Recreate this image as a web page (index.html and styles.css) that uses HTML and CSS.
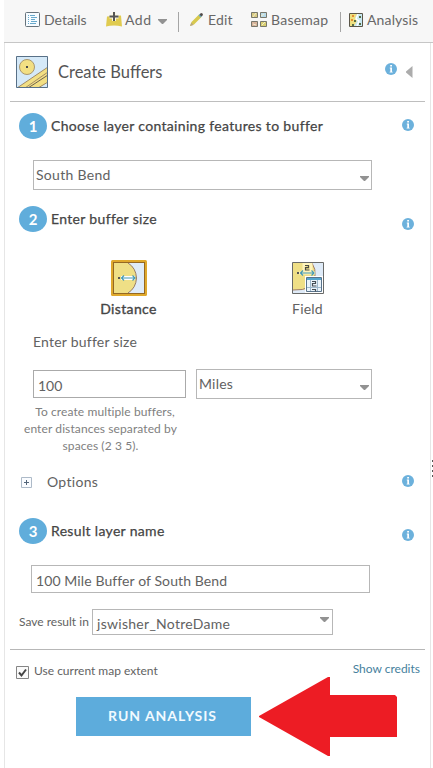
FILE: index.html
```html
<!DOCTYPE html>
<html lang="en">
<head>
<meta charset="utf-8">
<title>Create Buffers</title>
<link rel="stylesheet" href="styles.css">
</head>
<body>
<svg class="defs" width="0" height="0" aria-hidden="true">
  <symbol id="info" viewBox="0 0 12 12"><circle cx="6" cy="6" r="6" fill="#6cb1dc"/><path d="M4.8 4.6H7V8.7h.7v.9H4.6v-.9h.7V5.5h-.5zM5.2 2.1H7v1.5H5.2z" fill="#fff"/></symbol>
  <symbol id="caret" viewBox="0 0 9 5"><path d="M0 0h9v1L5 5H4L0 1z" fill="#929292"/></symbol>
</svg>
<div class="panel">
  <nav class="toolbar">
    <a class="tool details">
      <svg width="15" height="15" viewBox="0 0 15 15"><rect x=".5" y=".5" width="14" height="14" rx="1" fill="#f5fbff" stroke="#66737c"/><path d="M3 3.5h1m1 0h5M3 5.5h1m2 0h6M3 7.5h1m2 0h4M3 9.5h1m2 0h6M3 11.5h1m1 0h6" stroke="#68a9cc"/></svg>
      <span>Details</span></a>
    <a class="tool add">
      <svg width="16" height="15" viewBox="0 0 16 15"><path d="M1 4.500L15 3.500l1 11q-8-2-16 0z" fill="#e0cb50"/><path d="M8 0v9M3.500 4.500h9" stroke="#fbf8e4" stroke-width="4"/><path d="M8 0v9M3.500 4.500h9" stroke="#555" stroke-width="2"/></svg>
      <span>Add</span>
      <svg class="caret" width="9" height="5"><use href="#caret"/></svg></a>
    <i class="divider"></i>
    <a class="tool edit">
      <svg width="13" height="13" viewBox="0 0 13 13"><path d="M0 13l1.500-4L9 1.500 11.500 4l-7.500 7.500z" fill="#d8c94e"/><path d="M0 13l1.300-3.500L3.500 12z" fill="#b8a782"/><path d="M8.500 2.500L10 1l2 2-1.500 1.500z" fill="#69aabd"/><path d="M9.500 1.500L11 0q2 0 2 2l-1.500 1.500z" fill="#514b49"/></svg>
      <span>Edit</span></a>
    <a class="tool basemap">
      <svg width="16" height="15" viewBox="0 0 16 15"><g stroke="#77776b"><path d="M.5.5h6v5h-6z" fill="#d9cb83"/><path d="M9.500.5h6v5h-6z" fill="#b9dbe9"/><path d="M.5 9.500h6v5h-6z" fill="#d7b29a"/><path d="M9.500 9.500h6v5h-6z" fill="#d9cf72"/></g><path d="M2 5l3-4M10 4l3-2M2 12l3 1M11 13l3-3" stroke="#f0edcf"/></svg>
      <span>Basemap</span></a>
    <i class="divider second"></i>
    <a class="tool analysis">
      <svg width="14" height="14" viewBox="0 0 14 14"><path d="M.5.5h13v13H.5z" fill="#c8e8f2"/><path d="M1 1h7L6 5l2 3-3 5H1z" fill="#eee080"/><path d="M9 1l-2 5 3 2-2 5" stroke="#fff" stroke-width="1.300" fill="none"/><path d="M3 2h2v2H3zM2 6h2v2H2z" fill="#e58f35"/><path d="M10 3h2v2h-2zM5 7h2v2H5zM3 11h2v2H3zM10 10h2v2h-2z" fill="#596e46"/><path d="M.5.5h13v13H.5z" fill="none" stroke="#5b5649"/></svg>
      <span>Analysis</span></a>
  </nav>

  <main class="body">
    <header class="title">
      <svg width="32" height="32" viewBox="0 0 32 32"><path d="M0 0h32v32H0z" fill="#d5e9f8"/><path d="M1 32L32 11v15L23 32z" fill="#f2df83"/><path d="M1 32L32 11M9 32L32 16M22 32L32 26" stroke="#a18a66" fill="none"/><path d="M12 32L32 19" stroke="#6d6150" fill="none"/><circle cx="11" cy="11" r="7.500" fill="#f2df83" stroke="#aa976e"/><path d="M10 10h2v2h-2z" fill="#494949"/><path d="M.5.5h31v31H.5z" fill="none" stroke="#587087"/></svg>
      <h1>Create Buffers</h1>
      <svg class="info" width="12" height="12"><use href="#info"/></svg>
      <svg class="back" width="7" height="12" viewBox="0 0 7 12"><path d="M6.500 0v12L0 6.500v-1z" fill="#acacac"/></svg>
    </header>

    <section class="step one"><b class="num">1</b><h2>Choose layer containing features to buffer</h2><svg class="info" width="12" height="12"><use href="#info"/></svg></section>
    <div class="box layer"><span>South Bend</span><svg width="9" height="5"><use href="#caret"/></svg></div>

    <section class="step two"><b class="num">2</b><h2>Enter buffer size</h2><svg class="info" width="12" height="12"><use href="#info"/></svg></section>
    <div class="kinds">
      <div class="kind selected">
        <svg width="36" height="36" viewBox="0 0 36 36"><rect width="36" height="36" rx="1.500" fill="#dfa82c"/><path d="M2 2h32v32H2z" fill="#946823"/><path d="M3 3h30v30H3z" fill="#dfebf8"/><path d="M3 3h14q8 5 8.500 15Q25 28 17 33H3z" fill="#efdf86"/><path d="M17 3q8 5 8.500 15Q25 28 17 33" fill="none" stroke="#987b62"/><path d="M10 18h14" stroke="#fff" stroke-width="4"/><path d="M11 18h12M13 15.500L10.500 18l2.500 2.500M21.500 15.500L24 18l-2.500 2.500" fill="none" stroke="#4599b6" stroke-width="1.200"/><path d="M7 17h2v2H7z" fill="#555"/></svg>
        <span>Distance</span></div>
      <div class="kind">
        <svg width="32" height="32" viewBox="0 0 32 32"><path d="M0 0h32v32H0z" fill="#dfebf8"/><path d="M1 1h19q4 6 3 13Q22 27 10 28H1z" fill="#efdf86"/><path d="M20 1q4 6 3 13Q22 29 1 28" fill="none" stroke="#a07c68"/><path d="M7 11h16M12 2h7v7h-7z" stroke="#fff4bb" stroke-width="3" fill="none"/><path d="M13 3.500h3.500v2.200h-3v2.300h4" fill="none" stroke="#4c4c43" stroke-width="1.200"/><path d="M8.500 11h13M11 8.500L8.500 11l2.500 2.500M19.500 8.500L22 11l-2.500 2.500" fill="none" stroke="#4599b6" stroke-width="1.200"/><path d="M5 10h2v2H5z" fill="#555"/><path d="M13 14h19v18H13z" fill="#fff"/><path d="M14.500 15.500h15v14h-15z" fill="#eaf3fa" stroke="#59738b"/><path d="M15 16h14v2H15z" fill="#54a5ce"/><path d="M15 25.500h14M18.500 18v11M25.500 18v11" stroke="#9eb8cc"/><path d="M20 19.500h3.500v2h-3v2.500h4M20 27.500h3.500v2" fill="none" stroke="#454d55" stroke-width="1.200"/><path d="M.5.5h31v31H.5z" fill="none" stroke="#696a68"/></svg>
        <span>Field</span></div>
    </div>
    <label class="sizelabel"><span>Enter buffer size</span></label>
    <div class="sizes">
      <div class="box amount"><span>100</span></div>
      <div class="box units"><span>Miles</span><svg width="9" height="5"><use href="#caret"/></svg></div>
    </div>
    <p class="hint">&nbsp;&nbsp; To create multiple buffers,<br>enter distances separated by<br>spaces (2 3 5).</p>
    <div class="options">
      <svg width="11" height="11" viewBox="0 0 11 11"><path d="M.5.5h10v10H.5z" fill="#fafcff" stroke="#adbac8"/><path d="M3 5.500h5M5.500 3v5" stroke="#536579"/></svg>
      <span>Options</span>
      <svg class="info" width="12" height="12"><use href="#info"/></svg>
    </div>

    <section class="step three"><b class="num">3</b><h2>Result layer name</h2><svg class="info" width="12" height="12"><use href="#info"/></svg></section>
    <div class="box result"><span>100 Mile Buffer of South Bend</span></div>
    <div class="save"><label>Save result in</label><div class="box folder"><span>jswisher_NotreDame</span><svg width="9" height="5"><use href="#caret"/></svg></div></div>

    <footer>
      <div class="extent">
        <svg width="13" height="13" viewBox="0 0 13 13"><path d="M.5.5h12v12H.5z" fill="#fafafa" stroke="#858585"/><path d="M3 6.500l2.500 3L10 3.500" fill="none" stroke="#444" stroke-width="2"/></svg>
        <span>Use current map extent</span><a>Show credits</a>
      </div>
      <div class="run">
        <button><span>RUN ANALYSIS</span></button>
        <svg width="138" height="79" viewBox="0 0 138 79"><path d="M0 39L69 0h2v18h65l2 2v40H71v19h-2L0 40z" fill="#ed1c24"/></svg>
      </div>
    </footer>
  </main>
  <div class="grip"><i></i><i></i><i></i><i></i></div>
</div>
</body>
</html>
```
FILE: styles.css
```css
* { box-sizing: border-box; }
body { margin: 0; background: #fff; font-family: Lato, "Liberation Sans", sans-serif; font-size: 14px; line-height: 18px; color: #626262; overflow: hidden; }
svg { display: block; flex: none; }
span, h1, h2, label, a { white-space: nowrap; }
h1, h2 { margin: 0; font-weight: 400; }
.defs { position: absolute; }
.panel { position: relative; height: 768px; margin-left: 4px; }
.toolbar { display: flex; height: 43px; padding: 0 0 3px 21px; align-items: center; background: #f7f7f7; border-bottom: 1px solid #c6c6c6; color: #686868; }
.tool { display: flex; align-items: center; gap: 4px; }
.details { width: 81px; }
.add { width: 68px; gap: 3px; }
.add span { letter-spacing: .5px; }
.add .caret { margin: 4px 0 0 3px; }
.divider { width: 1px; height: 20px; margin: 4px 11px 0 4px; background: #a5a5a5; }
.edit { width: 61px; gap: 5px; }
.edit span { letter-spacing: .2px; }
.basemap { width: 85px; gap: 4px; }
.basemap span { letter-spacing: .25px; }
.second { margin: 4px 8px 0 4px; }
.analysis { gap: 4px; }
.analysis span { letter-spacing: .15px; }

.body { width: 427px; height: 725px; border-left: 1px solid #e6e6e6; border-right: 1px solid #e6e6e6; padding: 0 5px; }
.title { display: flex; align-items: center; height: 59px; padding: 0 12px 1px 6px; border-bottom: 1px solid #bebebe; }
.title h1 { margin-left: 10px; font-size: 16.5px; line-height: 22px; color: #555; }
.title .info { margin: 0 9px 5px auto; }
.step { display: flex; align-items: center; height: 28px; padding: 0 11px 0 9px; color: #454545; }
.step .info { margin-left: auto; }
.step h2 { margin-left: 4px; font-size: 14px; line-height: 18px; letter-spacing: .33px; -webkit-text-stroke: .25px #454545; }
.num { display: flex; align-items: center; justify-content: center; flex: none; width: 28px; height: 26px; padding-bottom: 1px; border-radius: 50%; background: #60addb; color: #fff; font-size: 15px; }
.one { margin-top: 10px; }
.one .info { margin-bottom: 2px; }
.box { display: flex; align-items: center; justify-content: space-between; border: 1px solid #b7b7b7; padding: 0 2px; background: #fff; }
.layer { width: 339px; height: 30px; margin: 20px 0 15px 23px; letter-spacing: .3px; }
.layer svg, .units svg { margin-top: 6px; }
.two .info { margin-top: 10px; }
.kinds { display: flex; height: 59px; margin-top: 26px; padding-left: 29px; }
.kind { display: flex; flex-direction: column; align-items: center; justify-content: flex-end; gap: 6px; width: 179px; letter-spacing: .2px; }
.kind.selected { gap: 4px; }
.selected span { -webkit-text-stroke: .35px #454545; color: #454545; letter-spacing: .35px; }
.sizelabel { display: block; margin: 15px 0 0 23px; letter-spacing: .22px; }
.sizes { display: flex; align-items: center; gap: 10px; margin: 18px 0 0 23px; }
.amount { width: 153px; height: 28px; padding: 3px 4px 0; border-color: #aaa; }
.units { width: 176px; height: 30px; letter-spacing: .2px; }
.hint { width: 181px; margin: 4px 0 0; text-align: center; font-size: 12px; line-height: 17px; letter-spacing: .1px; color: #808080; }
.options { display: flex; align-items: center; height: 20px; margin-top: 18px; padding: 0 11px; }
.options span { margin-left: 15px; letter-spacing: .3px; }
.options .info { margin: 0 0 2px auto; }
.three { margin-top: 25px; }
.three .info { margin-top: 8px; }
.result { width: 339px; height: 28px; margin: 20px 0 0 21px; padding: 3px 4px 0; letter-spacing: .1px; }
.save { display: flex; align-items: center; height: 26px; margin: 16px 0 14px; padding-left: 9px; }
.save label { width: 73px; font-size: 12px; }
.folder { width: 241px; height: 26px; padding: 0 3px 0 4px; letter-spacing: .28px; }
.folder span { margin-top: 4px; }
.folder svg { margin-bottom: 6px; }
footer { border-top: 1px solid #b7b7b7; }
.extent { display: flex; height: 27px; padding-left: 6px; font-size: 12px; }
.extent svg { margin-top: 16px; }
.extent span { margin: 12px auto 0 5px; }
.extent a { margin: 10px 5px 0 0; color: #467f9d; }
.run { display: flex; align-items: center; height: 79px; padding-left: 66px; }
button { width: 175px; height: 39px; margin-right: 8px; padding: 0 2px 1px 0; border: 0; background: #5dacdc; color: #f1faff; font: 700 14px/18px Lato, sans-serif; letter-spacing: .95px; }
.grip { position: absolute; left: 428px; top: 460px; display: grid; gap: 3px; }
.grip i { width: 1px; height: 2px; background: #555; }
```
